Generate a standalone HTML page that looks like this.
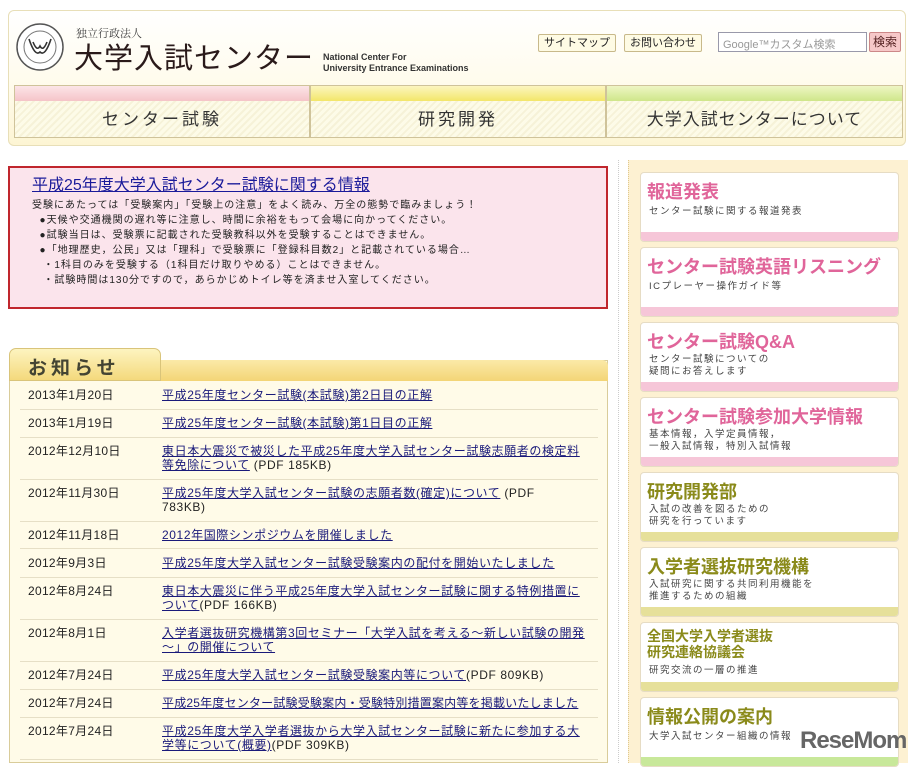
<!DOCTYPE html>
<html><head><meta charset="utf-8"><style>
*{margin:0;padding:0;box-sizing:border-box}
body{width:911px;height:763px;overflow:hidden;background:#fff;font-family:"Liberation Sans","Noto Sans CJK JP",sans-serif;position:relative;color:#222}
.abs{position:absolute}
a{color:#1a1a7a;text-decoration:underline}
#hdr{left:8px;top:10px;width:898px;height:136px;border:1px solid #e8dfb8;border-radius:6px;background:linear-gradient(180deg,#fff 0%,#fffbea 60%,#fdf5d4 100%)}
.nav{top:85px;height:53px;border:1px solid #cfc39a;background:repeating-linear-gradient(135deg,#fdfbe8 0 3px,#f6f2d8 3px 5px)}
.nav .strip{height:15px}
.nav .t{text-align:center;font-size:17px;letter-spacing:3px;line-height:37px;color:#333}
.btn{top:34px;height:18px;border:1px solid #c8b98a;background:#fefbe4;font-size:11px;line-height:16px;padding:0 5px;border-radius:2px}
#pink{left:8px;top:166px;width:600px;height:143px;border:2px solid #c0262d;background:#fbe4ec;padding:10px 0 0 22px;font-size:10px;line-height:15px;letter-spacing:1px}
#pink h2{font-size:16px;font-weight:normal;margin-bottom:5px;letter-spacing:0}
#pink h2 a{color:#1a1a9a}
#news{left:9px;top:360px;width:599px;height:403px;border:1px solid #d9cc9a;background:#fffbe8}
.tab{left:9px;top:348px;width:152px;height:33px;border-radius:7px 7px 0 0;background:linear-gradient(#fdf4c0,#f4d97c);border:1px solid #d9c47a;font-size:19px;letter-spacing:4px;padding:4px 0 0 18px;color:#443;font-weight:bold}
.bar{left:9px;top:360px;width:599px;height:21px;background:linear-gradient(#fbeaa8,#f3d576);border-radius:0 6px 0 0}
.row{position:absolute;left:20px;width:578px;border-bottom:1px solid #e6dfc6;font-size:12px;line-height:14px}
.row .d{position:absolute;left:8px;top:0;letter-spacing:0.3px}
.row .l{position:absolute;left:142px;top:0;width:432px;letter-spacing:0.6px}
#side{left:628px;top:160px;width:280px;height:603px;background:#fdf1d2;border-left:1px dotted #e0c890}
.card{position:absolute;left:11px;width:259px;height:70px;background:#fff;border:1px solid #e6dcc4;border-radius:4px;overflow:hidden}
.card .h{position:absolute;left:6px;top:5px;font-size:18px;font-weight:bold;letter-spacing:0}
.card .s{position:absolute;left:8px;font-size:9.5px;letter-spacing:1.5px;color:#444;line-height:12px}
.card .b{position:absolute;left:0;bottom:0;width:100%;height:9px}
.pk .h{color:#e0659a}.pk .b{background:#f6c6d8}
.gr .h{color:#8a8a1a}.gr .b{background:#e6e09a}
</style></head><body>
<div id="hdr" class="abs"></div>
<svg class="abs" style="left:15px;top:22px" width="50" height="50" viewBox="0 0 50 50"><circle cx="25" cy="25" r="23" fill="#fff" stroke="#555" stroke-width="1.5"/><circle cx="25" cy="25" r="16" fill="none" stroke="#777" stroke-width="1"/><path d="M14 17 Q20 35 25 30 Q30 35 36 17 M18 20 Q22 30 25 24 Q28 30 32 20" fill="none" stroke="#333" stroke-width="1.6"/></svg>
<div class="abs" style="left:76px;top:25px;font-size:11px;font-family:'Liberation Serif','Noto Serif CJK SC',serif;color:#444">独立行政法人</div>
<div class="abs" style="left:74px;top:35px;font-size:29px;color:#2a1a1a;letter-spacing:1px">大学入試センター</div>
<div class="abs" style="left:323px;top:52px;font-size:9px;line-height:11px;color:#333;font-weight:bold">National Center For<br>University Entrance Examinations</div>
<div class="abs btn" style="left:538px">サイトマップ</div>
<div class="abs btn" style="left:624px">お問い合わせ</div>
<div class="abs" style="left:718px;top:32px;width:149px;height:20px;border:1px solid #99a;background:#fff;font-size:11px;color:#999;padding:3px 4px">Google™カスタム検索</div>
<div class="abs" style="left:869px;top:32px;width:32px;height:20px;border:1px solid #c88;background:#f6c8c8;font-size:12px;line-height:18px;text-align:center;color:#522;border-radius:2px">検索</div>
<div class="abs nav" style="left:14px;width:296px"><div class="strip" style="background:linear-gradient(#fce5e8,#f5c4c8)"></div><div class="t">センター試験</div></div>
<div class="abs nav" style="left:310px;width:296px"><div class="strip" style="background:linear-gradient(#fcf6c0,#f3e66a)"></div><div class="t">研究開発</div></div>
<div class="abs nav" style="left:606px;width:297px"><div class="strip" style="background:linear-gradient(#eef6c4,#cfe68a)"></div><div class="t" style="letter-spacing:1px">大学入試センターについて</div></div>

<div class="abs" style="left:618px;top:160px;height:603px;border-left:1px dotted #ccc"></div>

<div id="pink" class="abs">
<h2><a>平成25年度大学入試センター試験に関する情報</a></h2>
受験にあたっては「受験案内」「受験上の注意」をよく読み、万全の態勢で臨みましょう！<br>
&nbsp;&nbsp;●天候や交通機関の遅れ等に注意し、時間に余裕をもって会場に向かってください。<br>
&nbsp;&nbsp;●試験当日は、受験票に記載された受験教科以外を受験することはできません。<br>
&nbsp;&nbsp;●「地理歴史，公民」又は「理科」で受験票に「登録科目数2」と記載されている場合…<br>
&nbsp;&nbsp;&nbsp;・1科目のみを受験する（1科目だけ取りやめる）ことはできません。<br>
&nbsp;&nbsp;&nbsp;・試験時間は130分ですので，あらかじめトイレ等を済ませ入室してください。
</div>

<div id="news" class="abs"></div>
<div class="abs bar"></div>
<div class="abs tab">お知らせ</div>
<div class="row" style="top:388px;height:22px"><span class="d">2013年1月20日</span><span class="l"><a>平成25年度センター試験(本試験)第2日目の正解</a></span></div>
<div class="row" style="top:416px;height:22px"><span class="d">2013年1月19日</span><span class="l"><a>平成25年度センター試験(本試験)第1日目の正解</a></span></div>
<div class="row" style="top:444px;height:36px"><span class="d">2012年12月10日</span><span class="l"><a>東日本大震災で被災した平成25年度大学入試センター試験志願者の検定料<br>等免除について</a> (PDF 185KB)</span></div>
<div class="row" style="top:486px;height:36px"><span class="d">2012年11月30日</span><span class="l"><a>平成25年度大学入試センター試験の志願者数(確定)について</a> (PDF<br>783KB)</span></div>
<div class="row" style="top:528px;height:21px"><span class="d">2012年11月18日</span><span class="l"><a>2012年国際シンポジウムを開催しました</a></span></div>
<div class="row" style="top:556px;height:22px"><span class="d">2012年9月3日</span><span class="l"><a>平成25年度大学入試センター試験受験案内の配付を開始いたしました</a></span></div>
<div class="row" style="top:584px;height:36px"><span class="d">2012年8月24日</span><span class="l"><a>東日本大震災に伴う平成25年度大学入試センター試験に関する特例措置に<br>ついて</a>(PDF 166KB)</span></div>
<div class="row" style="top:626px;height:36px"><span class="d">2012年8月1日</span><span class="l"><a>入学者選抜研究機構第3回セミナー「大学入試を考える～新しい試験の開発<br>～」の開催について</a></span></div>
<div class="row" style="top:668px;height:22px"><span class="d">2012年7月24日</span><span class="l"><a>平成25年度大学入試センター試験受験案内等について</a>(PDF 809KB)</span></div>
<div class="row" style="top:696px;height:22px"><span class="d">2012年7月24日</span><span class="l" style="white-space:nowrap;letter-spacing:0.2px"><a>平成25年度センター試験受験案内・受験特別措置案内等を掲載いたしました</a></span></div>
<div class="row" style="top:724px;height:36px"><span class="d">2012年7月24日</span><span class="l"><a>平成25年度大学入学者選抜から大学入試センター試験に新たに参加する大<br>学等について(概要)</a>(PDF 309KB)</span></div>

<div id="side" class="abs">
<div class="card pk" style="top:12px"><div class="h">報道発表</div><div class="s" style="top:33px">センター試験に関する報道発表</div><div class="b"></div></div>
<div class="card pk" style="top:87px"><div class="h">センター試験英語リスニング</div><div class="s" style="top:33px">ICプレーヤー操作ガイド等</div><div class="b"></div></div>
<div class="card pk" style="top:162px"><div class="h">センター試験Q&amp;A</div><div class="s" style="top:31px">センター試験についての<br>疑問にお答えします</div><div class="b"></div></div>
<div class="card pk" style="top:237px"><div class="h">センター試験参加大学情報</div><div class="s" style="top:31px">基本情報，入学定員情報，<br>一般入試情報，特別入試情報</div><div class="b"></div></div>
<div class="card gr" style="top:312px"><div class="h">研究開発部</div><div class="s" style="top:31px">入試の改善を図るための<br>研究を行っています</div><div class="b"></div></div>
<div class="card gr" style="top:387px"><div class="h">入学者選抜研究機構</div><div class="s" style="top:31px">入試研究に関する共同利用機能を<br>推進するための組織</div><div class="b"></div></div>
<div class="card gr" style="top:462px"><div class="h" style="font-size:14px;line-height:16px">全国大学入学者選抜<br>研究連絡協議会</div><div class="s" style="top:42px">研究交流の一層の推進</div><div class="b"></div></div>
<div class="card gr" style="top:537px;height:70px"><div class="h">情報公開の案内</div><div class="s" style="top:33px">大学入試センター組織の情報</div><div class="b" style="background:#c8e89a"></div></div>
</div>
<div class="abs" style="left:800px;top:727px;font-size:24px;font-weight:bold;color:#666;letter-spacing:-1px">ReseMom</div>
</body></html>
